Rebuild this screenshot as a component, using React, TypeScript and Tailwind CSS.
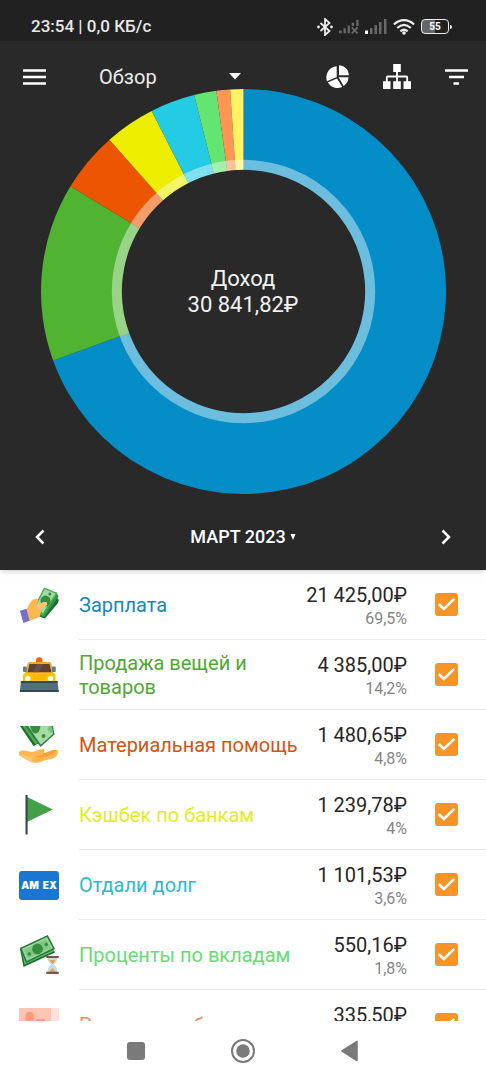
import { useState, type ReactNode } from "react";

type Category = {
  name: string;
  amount: string;
  share: string;
  color: string;
  icon: ReactNode;
};

const slices = [
  { value: 69.47, color: "#058dc7" },
  { value: 14.22, color: "#50b432" },
  { value: 4.8, color: "#ed5600" },
  { value: 4.02, color: "#eded00" },
  { value: 3.57, color: "#24cbe5" },
  { value: 1.78, color: "#64e572" },
  { value: 1.09, color: "#ff9655" },
  { value: 1.05, color: "#fff263" },
];

const OUTER = 203;
const HOLE = 122;

function point(radius: number, percent: number) {
  const angle = (percent / 100) * Math.PI * 2 - Math.PI / 2;
  return `${(OUTER + radius * Math.cos(angle)).toFixed(2)} ${(OUTER + radius * Math.sin(angle)).toFixed(2)}`;
}

function Donut() {
  let start = 0;
  return (
    <svg viewBox="0 0 406 406" className="block w-full" aria-hidden="true">
      {slices.map((slice) => {
        const from = start;
        const to = start + slice.value;
        start = to;
        const large = slice.value > 50 ? 1 : 0;
        return (
          <path
            key={slice.color}
            fill={slice.color}
            d={`M${point(OUTER, from)} A${OUTER} ${OUTER} 0 ${large} 1 ${point(OUTER, to)} L${point(HOLE, to)} A${HOLE} ${HOLE} 0 ${large} 0 ${point(HOLE, from)}Z`}
          />
        );
      })}
      <circle cx="203" cy="203" r="127" fill="none" stroke="#fff" strokeOpacity="0.42" strokeWidth="10" />
    </svg>
  );
}

function HandCash() {
  return (
    <svg viewBox="0 0 40 40" className="size-10">
      <path d="M35 8 39.8 15 39 18 26 33.5 20 31.5Z" fill="#1b6e31" />
      <path d="M37 7 39.6 11.5 25.5 32 20 30Z" fill="#2e9447" />
      <path d="M25 2.5 38.6 8 24 31 14 24Z" fill="#4caf50" />
      <path d="M25.7 4.2 36.4 8.6 24 28 16 23Z" fill="#a5dba7" />
      <ellipse cx="26.5" cy="16" rx="5" ry="5.5" fill="#388e3c" />
      <circle cx="30.8" cy="9" r="1.5" fill="#388e3c" />
      <path d="M7.5 25C9.5 21 10.5 17 14.5 14.5 17.5 13 20 13.8 19.2 16.3L17.5 20 24.5 17.2C27.5 16.3 29 18.3 27.3 20.3L22.5 24 21 31C17.5 34.5 14 33.5 10 36Z" fill="#ffb74d" />
      <path d="M17.5 20 24.5 17.2C27.5 16.3 29 18.3 27.3 20.3L22.5 24 18.5 25Z" fill="#ffc477" />
      <path d="M1 25.7 7.5 23.8 10.5 35.8 4.3 38Z" fill="#7471c9" />
    </svg>
  );
}

function Plough() {
  return (
    <svg viewBox="0 0 40 40" className="size-10">
      <path d="M17 7V5.5A3.2 3.2 0 0 1 23.4 5.5V7Z" fill="#ff5722" />
      <path d="M8.5 9Q9 7 11 7H30Q32 7 32.5 9L34.5 19H6Z" fill="#f9a825" />
      <path d="M10.5 9H30.5L32.5 17.5H8.5Z" fill="#5d4037" />
      <path d="M18 9H24L20 17.5H14Z" fill="#6d4c41" />
      <path d="M4 21Q4 18 7 17.5H33.5Q36.500 18 36.5 21V29H4Z" fill="#ffc107" />
      <path d="M13 19H28L26 25H15Z" fill="#f9b510" />
      <rect x="4" y="11.5" width="3.8" height="5.5" rx="1" fill="#607d8b" />
      <rect x="33" y="11.5" width="3.8" height="5.5" rx="1" fill="#607d8b" />
      <circle cx="8.8" cy="23.5" r="2.7" fill="#fff8e1" />
      <circle cx="31.5" cy="23.5" r="2.7" fill="#fff8e1" />
      <path d="M2 26H38.5L39.7 37H.8Z" fill="#546e7a" />
      <path d="M2 26H38.5L38.7 28H1.8Z" fill="#37474f" />
      <path d="M1 35H39.5L39.7 37H.8Z" fill="#37474f" />
    </svg>
  );
}

function CashToHand() {
  return (
    <svg viewBox="0 0 40 40" className="size-10">
      <path d="M1 1H10L20 18 14.5 21Z" fill="#1b6e31" />
      <path d="M3.5 1H12L20 17 16.5 19.5Z" fill="#4caf50" />
      <path d="M6 1H34L35.5 9.5 21.5 22Z" fill="#2e7d43" />
      <path d="M9 1H32.5L34 9 21.8 19.8Z" fill="#a5dba7" />
      <path d="M11 1H21.5Q20.5 9 16 8.5 12.5 7.5 11 1Z" fill="#388e3c" />
      <circle cx="24.5" cy="11" r="2" fill="#388e3c" />
      <path d="M32.5 1 34 6 32 8 28.5 5 30 1Z" fill="#78c47d" />
      <path d="M0 27C3 24.8 7 25.2 10 26.5 16 28.5 21 22.5 25.5 24.5L25 28C29 28 33 23.5 39.2 25.5 39 32 35 33.5 29 34.5 23 35.5 21 38.5 15.5 37.8 11 37 6 33.5 0 30Z" fill="#ffb74d" />
      <path d="M14 31C20 32 23 30.5 25 28 29 28 33 23.5 38 25.3 34 29 28 32 21 32.5Z" fill="#f9a03c" />
      <path d="M0 28.5Q8 32 14 32 11 34 15 37.8 8 36 0 30Z" fill="#ffc477" />
    </svg>
  );
}

function Flag() {
  return (
    <svg viewBox="0 0 40 40" className="size-10">
      <path d="M8 2 33.8 14.4 8 27Z" fill="#43a047" />
      <rect x="6.5" y="0" width="2.1" height="39.5" fill="#37474f" />
    </svg>
  );
}

function Amex() {
  return (
    <span className="flex h-[29px] w-10 items-center justify-center gap-1 rounded-[3px] bg-[#1976d2] font-[Inter,sans-serif] text-[10px] font-black text-white">
      <span>AM</span>
      <span>EX</span>
    </span>
  );
}

function CashTimer() {
  return (
    <svg viewBox="0 0 40 40" className="size-10">
      <path d="M1 14 29 5 36 17.5 4.5 32Z" fill="#1b6e31" />
      <path d="M3 17 31 7 35.5 16 5.5 29.5Z" fill="#66bb6a" />
      <path d="M.8 13 28.8 0 36 14 7 28Z" fill="#23783b" />
      <path d="M2.8 13.8 28 2 34 13.3 7.8 26Z" fill="#9bd69d" />
      <path d="M5 14.7 27.2 4.5 31.6 12.8 9 23.5Z" fill="#81c784" />
      <circle cx="18.5" cy="14" r="5.4" fill="#388e3c" />
      <circle cx="10.3" cy="19" r="1.8" fill="#388e3c" />
      <circle cx="27.3" cy="9.5" r="1.8" fill="#388e3c" />
      <path d="M28.5 22H38.5Q38.5 27 34.8 29.5 38.5 32 38.5 37.5H28.5Q28.5 32 32.2 29.5 28.5 27 28.5 22Z" fill="#c5dbe6" />
      <path d="M30.5 25H36.5Q35.5 27.5 33.5 29 31.5 27.5 30.5 25ZM33.5 33 36.8 37H30.2Z" fill="#ef9a50" />
      <path d="M27.3 21H39.7V23H27.3ZM27.3 36.8H39.7V39H27.3Z" fill="#795548" />
    </svg>
  );
}

function PinkNote() {
  return (
    <svg viewBox="0 0 40 40" className="size-10">
      <path d="M0 3H40V37H0Z" fill="#ffe1dc" />
      <path d="M0 3H32V37H0Z" fill="#ffc5b3" />
      <ellipse cx="10.7" cy="12" rx="4.6" ry="5.5" fill="#ff9980" />
      <path d="M17 14H26V17H17ZM4 17H17V24H4Z" fill="#ff9980" />
    </svg>
  );
}

const categories: Category[] = [
  { name: "Зарплата", amount: "21 425,00₽", share: "69,5%", color: "text-[#1688b8]", icon: <HandCash /> },
  { name: "Продажа вещей и товаров", amount: "4 385,00₽", share: "14,2%", color: "text-[#50a832]", icon: <Plough /> },
  { name: "Материальная помощь", amount: "1 480,65₽", share: "4,8%", color: "text-[#d35412]", icon: <CashToHand /> },
  { name: "Кэшбек по банкам", amount: "1 239,78₽", share: "4%", color: "text-[#e2ee18]", icon: <Flag /> },
  { name: "Отдали долг", amount: "1 101,53₽", share: "3,6%", color: "text-[#2cbad0]", icon: <Amex /> },
  { name: "Проценты по вкладам", amount: "550,16₽", share: "1,8%", color: "text-[#66dc74]", icon: <CashTimer /> },
  { name: "Разные кэшбэки", amount: "335,50₽", share: "1,1%", color: "text-[#e09060]", icon: <PinkNote /> },
];

function CategoryRow({ item }: { item: Category }) {
  const [checked, setChecked] = useState(true);
  return (
    <li>
      <label className="flex h-[70px] gap-5 pl-[19px]">
        <span className="flex w-10 shrink-0 items-center justify-center">{item.icon}</span>
        <span className="flex min-w-0 flex-1 items-center border-b border-[#e8e8e8] pr-7">
          <span className={`min-w-0 flex-1 text-xl leading-6 ${item.color}`}>{item.name}</span>
          <span className="flex w-[108px] shrink-0 flex-col pt-1 text-right">
            <span className="text-xl leading-6 text-[#262626]">{item.amount}</span>
            <span className="text-base leading-6 text-[#858585]">{item.share}</span>
          </span>
          <span className="ml-7 grid size-[23px] shrink-0">
            <input
              type="checkbox"
              checked={checked}
              onChange={() => setChecked(!checked)}
              className="col-start-1 row-start-1 size-full appearance-none rounded-[3px] border-2 border-[#f79428] checked:bg-[#f79428]"
            />
            {checked && (
              <svg viewBox="0 0 23 23" className="pointer-events-none col-start-1 row-start-1 size-full">
                <path d="m3.8 11 5 5L19.3 5.8" fill="none" stroke="#fff" strokeWidth="2.5" />
              </svg>
            )}
          </span>
        </span>
      </label>
    </li>
  );
}

function StatusBar() {
  return (
    <div className="flex h-[41px] items-center justify-between bg-[#212121] pt-3 pr-[34px] pl-[31px]">
      <span className="text-[17px] font-medium text-[#e8e8e8]">23:54 | 0,0 КБ/с</span>
      <div className="flex items-center gap-[6px]">
        <svg viewBox="0 0 16 18" className="h-[18px] w-4">
          <path d="m3.5 5 9 8L8 17V1l4.5 4-9 8" fill="none" stroke="#eee" strokeWidth="1.8" />
          <circle cx="1.5" cy="9" r="1.4" fill="#eee" />
          <circle cx="14.5" cy="9" r="1.4" fill="#eee" />
        </svg>
        <svg viewBox="0 0 22 15" className="h-[15px] w-5" fill="#686868">
          <path d="M0 12H3V15H0ZM5 9.5H7.5V15H5ZM9.5 6.5H12V15H9.5ZM14 3.5H16.5V7H14ZM19 0H21.5V7H19Z" />
          <path d="m14 8.500 6.500 6.500m0-6.500L14 15" stroke="#686868" strokeWidth="2" />
        </svg>
        <svg viewBox="0 0 22 15" className="h-[15px] w-[22px]" fill="#686868">
          <path d="M0 11.5H3V15H0Z" fill="#fff" />
          <path d="M5 9H7.5V15H5ZM9.5 6H12V15H9.5ZM14 3H16.5V15H14ZM19 0H21.5V15H19Z" />
        </svg>
        <svg viewBox="0 0 22 16" className="h-4 w-[22px]" fill="none" stroke="#eee" strokeWidth="2.2">
          <path d="M1 5.5C7-.3 15-.3 21 5.5M4.2 9C8.5 5 13.5 5 17.8 9M7.4 12.3Q11 9.2 14.6 12.3" />
          <circle cx="11" cy="14" r="1.8" fill="#eee" stroke="none" />
        </svg>
        <div className="flex items-center gap-px">
          <span className="flex h-[15px] w-7 items-center justify-center rounded-[4px] border border-[#eee] bg-linear-to-r from-[#666] from-50% to-transparent to-50% text-[10px] font-bold text-white">
            55
          </span>
          <span className="h-1 w-[2px] rounded-r bg-[#eee]" />
        </div>
      </div>
    </div>
  );
}

function Toolbar() {
  return (
    <div className="flex items-center pt-[23px] pr-[18px] pl-[23px]">
      <button type="button" aria-label="Меню" className="mr-[52px] flex h-[25px] w-6 items-center">
        <svg viewBox="0 0 24 16" className="h-4 w-6">
          <path d="M0 1.5H23M0 8H23M0 14.5H23" stroke="#fff" strokeWidth="2.6" />
        </svg>
      </button>
      <div className="grid w-[142px] items-center">
        <select aria-label="Раздел" className="col-start-1 row-start-1 h-[25px] w-full appearance-none bg-transparent text-xl leading-6 text-[#ededed]">
          <option>Обзор</option>
        </select>
        <svg viewBox="0 0 12 7" className="pointer-events-none col-start-1 row-start-1 h-[7px] w-3 justify-self-end">
          <path d="M0 0H12L6 6.500Z" fill="#fff" />
        </svg>
      </div>
      <div className="ml-auto flex h-[25px] items-center gap-[33px]">
        <button type="button" aria-label="Диаграмма">
          <svg viewBox="0 0 24 24" className="block size-6" fill="#fff">
            <path d="M13 .3A10 10 0 0 1 23 10.3H13ZM10.7 1.2V12L1 16.2A11.3 11.3 0 0 1 10.7 1.2ZM11 13.5 16.3 22A11.3 11.3 0 0 1 1.8 17.6ZM12.6 12.2H22.5A11.3 11.3 0 0 1 17.7 21Z" />
          </svg>
        </button>
        <button type="button" aria-label="Структура">
          <svg viewBox="0 0 28 25" className="block h-[25px] w-7" fill="#fff">
            <path d="M10.2 0H17.8V8H10.2ZM0 17.3H7.5V25H0ZM10.2 17.3H17.8V25H10.2ZM20.5 17.3H28V25H20.5Z" />
            <path d="M14 7V18M3.8 18V13.5Q3.8 12.5 4.8 12.5H23.2Q24.2 12.5 24.2 13.5V18" fill="none" stroke="#fff" strokeWidth="1.8" />
          </svg>
        </button>
        <button type="button" aria-label="Фильтр">
          <svg viewBox="0 0 24 16" className="block h-4 w-6">
            <path d="M1 1.5H24M5 8H20M9.5 14.5H15" stroke="#fff" strokeWidth="2.6" />
          </svg>
        </button>
      </div>
    </div>
  );
}

export default function App() {
  return (
    <div className="flex h-screen flex-col bg-white font-[Roboto,sans-serif]">
      <header className="relative z-10 shrink-0 bg-[#292929] shadow-md">
        <StatusBar />
        <Toolbar />
        <div className="mx-auto grid w-5/6 place-items-center">
          <div className="col-start-1 row-start-1 w-full">
            <Donut />
          </div>
          <p className="col-start-1 row-start-1 text-center text-[22px] leading-[26px] text-[#f2f2f2]">
            Доход
            <br />
            30 841,82₽
          </p>
        </div>
        <div className="flex items-center justify-between px-7 pt-[11px] pb-px">
          <button type="button" aria-label="Предыдущий месяц" className="flex h-16 w-6 items-center justify-center">
            <svg viewBox="0 0 10 16" className="h-4 w-[10px]">
              <path d="M8.5 1.5 2 8l6.5 6.5" fill="none" stroke="#fff" strokeWidth="2.5" />
            </svg>
          </button>
          <button type="button" className="flex items-center gap-1 text-lg font-medium text-white">
            МАРТ 2023
            <svg viewBox="0 0 6 6" className="size-[6px]">
              <path d="M.5 0H5.5L3 6Z" fill="#fff" />
            </svg>
          </button>
          <button type="button" aria-label="Следующий месяц" className="flex h-16 w-6 items-center justify-center">
            <svg viewBox="0 0 10 16" className="h-4 w-[10px]">
              <path d="M1.5 1.5 8 8l-6.5 6.5" fill="none" stroke="#fff" strokeWidth="2.5" />
            </svg>
          </button>
        </div>
      </header>
      <ul className="min-h-0 flex-1 overflow-y-auto [scrollbar-width:none]">
        {categories.map((item) => (
          <CategoryRow key={item.name} item={item} />
        ))}
      </ul>
      <nav className="flex h-[59px] shrink-0 items-center justify-center gap-[83px] bg-white">
        <button type="button" aria-label="Последние приложения" className="flex size-6 items-center justify-center">
          <span className="size-[18px] rounded-[3px] bg-[#7a7a7a]" />
        </button>
        <button type="button" aria-label="Домой" className="size-6">
          <svg viewBox="0 0 24 24" className="size-6">
            <circle cx="12" cy="12" r="11" fill="none" stroke="#7a7a7a" strokeWidth="2" />
            <circle cx="12" cy="12" r="6.8" fill="#7a7a7a" />
          </svg>
        </button>
        <button type="button" aria-label="Назад" className="size-6">
          <svg viewBox="0 0 24 24" className="size-6">
            <path d="M4 12 19 2.5V21.5Z" fill="#7a7a7a" stroke="#7a7a7a" strokeLinejoin="round" strokeWidth="1.5" />
          </svg>
        </button>
      </nav>
    </div>
  );
}
